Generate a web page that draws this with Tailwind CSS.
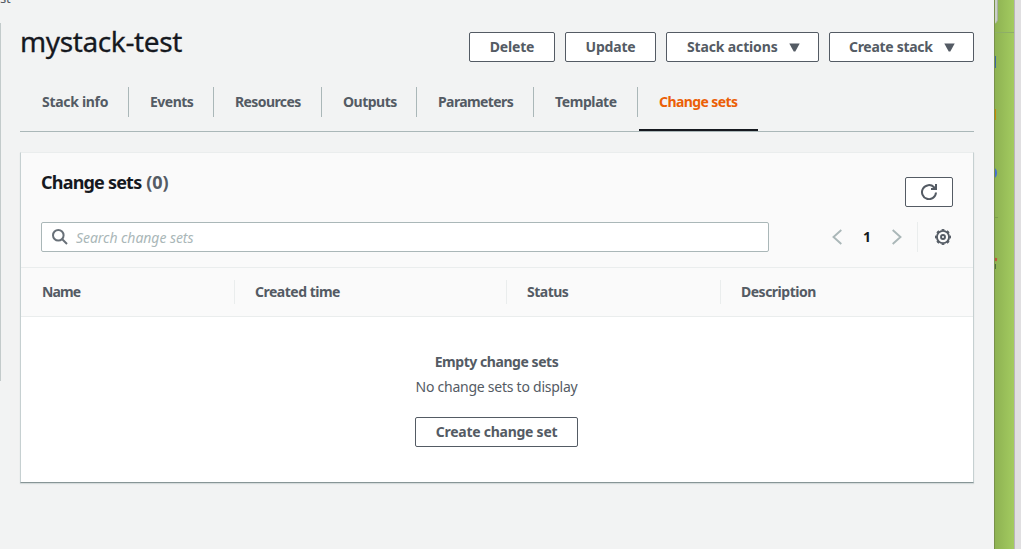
<!DOCTYPE html>
<html lang="en">
<head>
<meta charset="utf-8">
<title>mystack-test</title>
<script src="https://cdn.jsdelivr.net/npm/@tailwindcss/browser@4"></script>
</head>
<body class="w-[1021px] h-[549px] overflow-hidden bg-[#f2f3f3] font-['Noto_Sans','Open_Sans',sans-serif] text-[14px] leading-[22px] text-[#545b64]">
<div class="relative flex w-[1021px] h-[549px]">
  <span class="absolute left-0 -top-[12px] text-[13px] leading-[20px] tracking-[-0.3px]">st</span>
  <aside class="w-5 shrink-0 pt-[23px]"><div class="w-px h-[358px] bg-[#c3cbcb]"></div></aside>
  <main class="w-[954px] shrink-0">
    <header class="flex justify-between h-[87px]">
      <h1 class="pt-[23px] text-[28px] leading-[36px] text-[#16191f] tracking-[-0.38px] whitespace-nowrap [-webkit-text-stroke:0.3px_#16191f]">mystack-test</h1>
      <div class="flex gap-[10px] pt-8 font-bold whitespace-nowrap tracking-[-0.2px]">
        <button class="flex items-center justify-center w-[86px] h-[30px] bg-white border border-[#545b64] rounded-[2px]">Delete</button>
        <button class="flex items-center justify-center w-[91px] h-[30px] bg-white border border-[#545b64] rounded-[2px]">Update</button>
        <button class="flex items-center justify-between pl-5 pr-[18px] w-[153px] h-[30px] bg-white border border-[#545b64] rounded-[2px]"><span class="tracking-[-0.15px]">Stack actions</span><svg class="w-[11px] h-[9px]" viewBox="0 0 11 9" fill="#545b64"><path d="M.3.5h10.4L6.3 8.5H4.7z"/></svg></button>
        <button class="flex items-center justify-between pl-[19px] pr-[18px] w-[145px] h-[30px] bg-white border border-[#545b64] rounded-[2px]"><span class="tracking-[-0.3px]">Create stack</span><svg class="w-[11px] h-[9px]" viewBox="0 0 11 9" fill="#545b64"><path d="M.3.5h10.4L6.3 8.5H4.7z"/></svg></button>
      </div>
    </header>
    <nav class="flex h-[45px] border-b border-[#aab7b8] font-bold leading-[30px] whitespace-nowrap tracking-[-0.5px]">
      <a class="w-[109px] h-[30px] pl-[22px] border-r border-[#aab7b8]"><span class="tracking-[-0.3px]">Stack info</span></a>
      <a class="w-[85px] h-[30px] pl-[21px] border-r border-[#aab7b8]"><span>Events</span></a>
      <a class="w-[108px] h-[30px] pl-[21px] border-r border-[#aab7b8]"><span class="tracking-[-0.6px]">Resources</span></a>
      <a class="w-[95px] h-[30px] pl-[21px] border-r border-[#aab7b8]"><span>Outputs</span></a>
      <a class="w-[117px] h-[30px] pl-[21px] border-r border-[#aab7b8]"><span class="tracking-[-0.6px]">Parameters</span></a>
      <a class="w-[104px] h-[30px] pl-[21px] border-r border-[#aab7b8]"><span class="tracking-[-0.4px]">Template</span></a>
      <a class="ml-px w-[119px] h-[44px] pl-[20px] text-[#eb5f07] border-b-2 border-[#16191f]"><span class="tracking-[-0.6px]">Change sets</span></a>
    </nav>
    <section class="mt-5 h-[331px] bg-white border-x border-t border-x-[#c6d0d1] border-t-[#eaeded] border-b border-b-[#879596] shadow-[0_1px_1px_#d5dbdb]">
      <div class="h-[115px] px-5 bg-[#fafafa] border-b border-[#eaeded]">
        <div class="flex justify-between h-[69px]">
          <h2 class="pt-[18px] text-[18px] leading-[22px] font-bold text-[#16191f] tracking-[-0.8px] whitespace-nowrap">Change sets <span class="ml-px text-[#545b64] tracking-[-0.1px]">(0)</span></h2>
          <button class="mt-6 flex items-center justify-center w-12 h-[30px] bg-white border border-[#545b64] rounded-[2px]">
            <svg class="w-4 h-4" viewBox="0 0 16 16" fill="none" stroke="#545b64" stroke-width="2"><path d="M15 8.5A7 7 0 1 1 13 3.2L14.5 4.7"/><path d="M15 0V5H10"/></svg>
          </button>
        </div>
        <div class="flex h-[30px]">
          <div class="flex items-center w-[728px] h-[30px] pl-[10px] bg-white border border-[#aab7b8] rounded-[2px]">
            <svg class="w-4 h-4" viewBox="0 0 16 16" fill="none" stroke="#687078" stroke-width="2"><circle cx="6.3" cy="6.3" r="5.3"/><path d="M10 10l5 5"/></svg>
            <span class="ml-2 pt-px italic text-[#aab7b8] tracking-[-0.05px] whitespace-nowrap">Search change sets</span>
          </div>
          <div class="flex items-center ml-[63px] h-[30px]">
            <svg class="w-[11px] h-4" viewBox="0 0 11 16" fill="none" stroke="#aab7b8" stroke-width="1.9"><path d="M9.3 1L1.5 8l7.8 7"/></svg>
            <span class="w-[48px] text-center font-bold text-[#16191f]">1</span>
            <svg class="w-[11px] h-4" viewBox="0 0 11 16" fill="none" stroke="#aab7b8" stroke-width="1.9"><path d="M1.7 1L9.5 8l-7.8 7"/></svg>
          </div>
          <div class="flex items-center ml-[15px] pl-[17px] h-[30px] border-l border-[#eaeded]">
            <svg class="w-4 h-4" viewBox="0 0 16 16" fill="none" stroke="#545b64"><circle cx="8" cy="8" r="6.1" stroke-width="1.9"/><circle cx="8" cy="8" r="7.3" stroke-width="1.4" pathLength="16" stroke-dasharray="1 1" stroke-dashoffset="0.5"/><circle cx="8" cy="8" r="2" stroke-width="1.9"/></svg>
          </div>
        </div>
      </div>
      <div class="flex items-center h-[49px] bg-[#fafafa] border-b border-[#eaeded] font-bold leading-[24px] whitespace-nowrap tracking-[-0.5px]">
        <div class="w-[214px] pl-[21px] border-r border-[#eaeded]"><span class="tracking-[-0.9px]">Name</span></div>
        <div class="w-[272px] pl-5 border-r border-[#eaeded]"><span>Created time</span></div>
        <div class="w-[214px] pl-5 border-r border-[#eaeded]"><span>Status</span></div>
        <div class="pl-5"><span>Description</span></div>
      </div>
      <div class="flex flex-col items-center pt-[34px] pr-px whitespace-nowrap">
        <p class="font-bold tracking-[-0.45px]">Empty change sets</p>
        <p class="mt-[3px] tracking-[-0.25px]">No change sets to display</p>
        <button class="mt-[19px] flex items-center justify-center w-[163px] h-[30px] bg-white border border-[#545b64] rounded-[2px] font-bold tracking-[-0.25px]">Create change set</button>
      </div>
    </section>
  </main>
  <div class="w-5 shrink-0"></div>
  <div class="relative w-5 shrink-0 overflow-hidden border-l border-[#789149] bg-linear-to-r from-[#8eb252] to-[#a3cb60]">
    <div class="absolute -left-2 -top-3 w-[11px] h-9 bg-[#ccd1c8] border-r border-[#aab0a5] rounded-br-[5px]"></div>
    <div class="absolute left-0 top-8 w-5 h-px bg-[#8eae67]"></div>
    <div class="absolute left-0 top-14 w-px h-3 bg-[#3e68a0]"></div>
    <div class="absolute left-0 top-[109px] w-px h-[11px] bg-[#c78a05]"></div>
    <div class="absolute -left-[9px] top-[167px] w-[11px] h-[12px] rounded-full bg-[#456fd0]"></div>
    <div class="absolute left-0 top-[217px] w-[3px] h-px bg-[#7d9e4b]"></div>
    <div class="absolute -left-px top-[258px] w-[3px] h-[3px] bg-[#c0563a] rotate-12"></div>
    <div class="absolute left-0 top-[264px] w-px h-[5px] bg-[#4f6f3d]"></div>
  </div>
  <div class="w-[7px] shrink-0 border-l border-[#b9b4bb] bg-[#e0dfe1]"></div>
</div>
</body>
</html>
